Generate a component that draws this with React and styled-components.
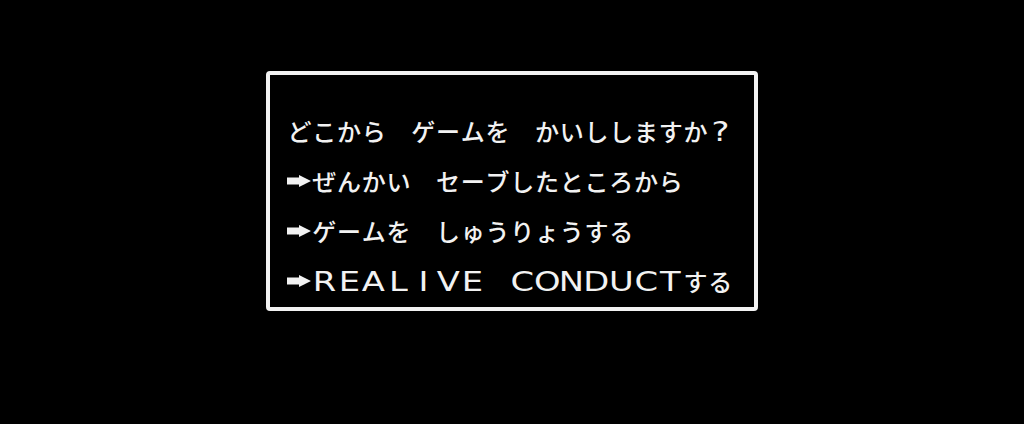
import React from "react";
import styled, {createGlobalStyle} from "styled-components";

const GlobalStyle = createGlobalStyle`
  html, body {
    margin: 0;
    padding: 0;
    background: #000;
  }
`;

const Screen = styled.div`
  width: 1024px;
  height: 424px;
  background: #000;
  display: flex;
  justify-content: center;
  align-items: flex-start;
  padding-top: 71px;
  box-sizing: border-box;
`;

const Window = styled.div`
  width: 492px;
  height: 240px;
  box-sizing: border-box;
  border: 4px solid #f2f2f2;
  border-radius: 4px;
  background: #000;
  padding: 31px 0 0 17px;
  display: flex;
  flex-direction: column;
`;

const Row = styled.div`
  display: flex;
  align-items: center;
  height: 50px;
`;

const Cell = styled.span`
  flex: none;
  width: 24.75px;
  display: flex;
  justify-content: center;
  align-items: center;
  color: #f2f2f2;
  font-family: ${p => p.$latin ? '"DejaVu Sans", sans-serif' : '"Noto Sans CJK JP", sans-serif'};
  font-size: ${p => p.$latin ? '27px' : '24px'};
  font-weight: 500;
  line-height: 1;
  white-space: pre;
  transform: ${p => p.$latin ? 'scaleX(1.25)' : 'none'};
`;

const Arrow = () => (
    <svg width="24" height="12" viewBox="0 0 24 12">
        <path d="M0 2.5H12V0L24 6L12 12V9.5H0Z" fill="#f2f2f2"/>
    </svg>
)

const lines = [
    {arrow: false, text: "どこから　ゲームを　かいししますか?"},
    {arrow: true, text: "ぜんかい　セーブしたところから"},
    {arrow: true, text: "ゲームを　しゅうりょうする"},
    {arrow: true, text: "REALIVE　CONDUCTする"},
];

const Line = ({arrow, text}) => (
    <Row>
        {arrow && <Cell><Arrow/></Cell>}
        {Array.from(text).map((ch, i) => (
            <Cell key={i} $latin={/[A-Z?]/.test(ch)}>{ch}</Cell>
        ))}
    </Row>
)

export default function App() {
    return (
        <>
            <GlobalStyle/>
            <Screen>
                <Window>
                    {lines.map((l, i) => <Line key={i} {...l}/>)}
                </Window>
            </Screen>
        </>
    )
}
